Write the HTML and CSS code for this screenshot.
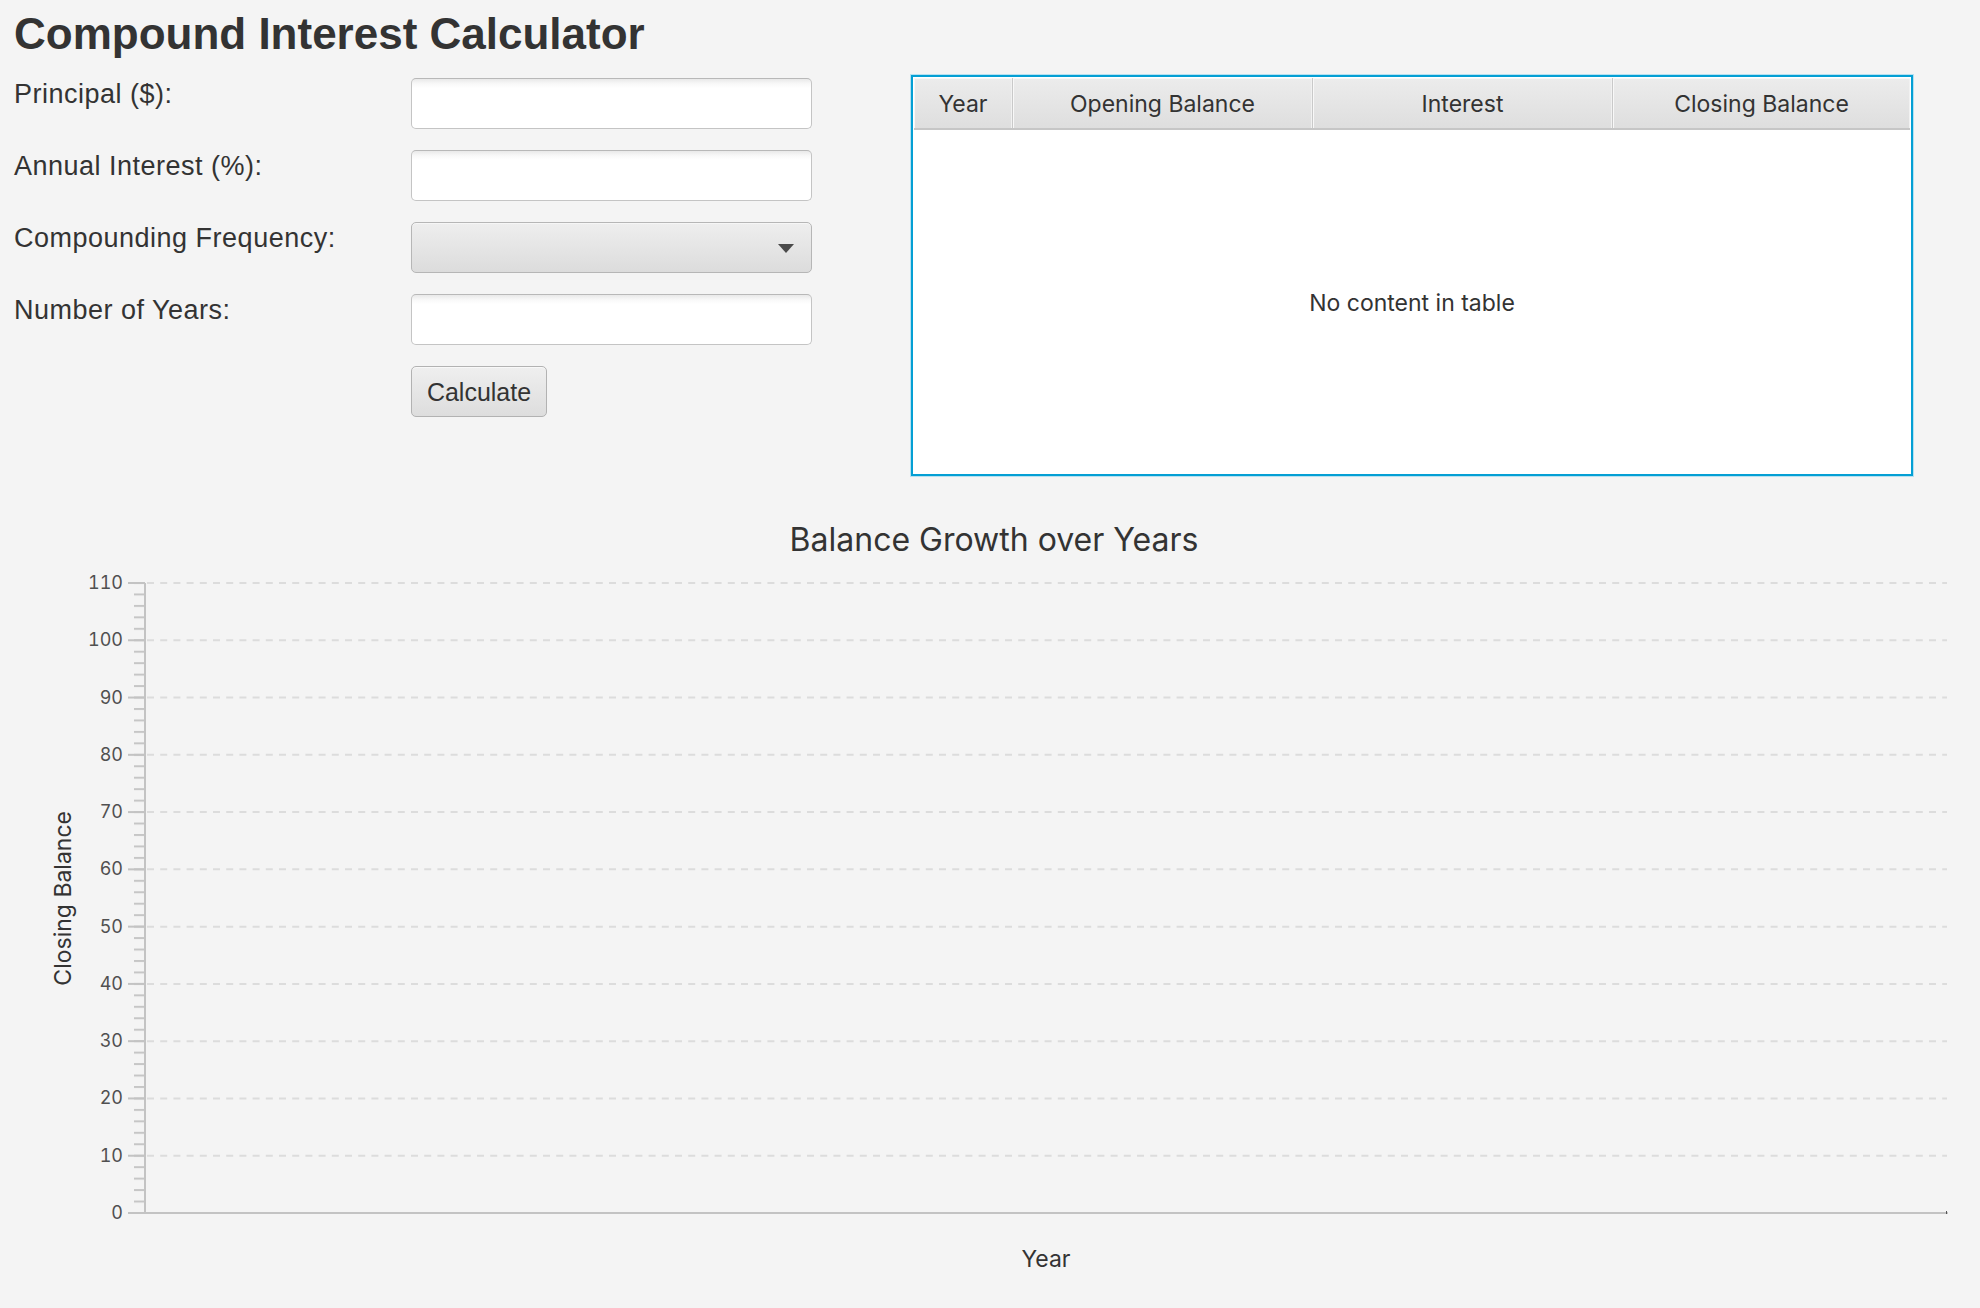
FILE: index.html
```html
<!DOCTYPE html>
<html>
<head>
<meta charset="utf-8">
<title>Compound Interest Calculator</title>
<link rel="stylesheet" href="styles.css">
</head>
<body>
<div class="app">
  <h1 class="title">Compound Interest Calculator</h1>
  <div class="top">
    <div class="form">
      <div class="label">Principal ($):</div>
      <div class="field input"></div>
      <div class="label">Annual Interest (%):</div>
      <div class="field input"></div>
      <div class="label">Compounding Frequency:</div>
      <div class="field combo"><span class="arrow"></span></div>
      <div class="label">Number of Years:</div>
      <div class="field input"></div>
      <div class="label"></div>
      <div class="cell-btn"><button class="btn">Calculate</button></div>
    </div>
    <div class="table">
      <div class="thead">
        <div class="th">Year</div>
        <div class="th">Opening Balance</div>
        <div class="th">Interest</div>
        <div class="th last">Closing Balance</div>
      </div>
      <div class="tbody">No content in table</div>
    </div>
  </div>
  <div class="chart">
    <div class="chart-title">Balance Growth over Years</div>
    <div class="chart-body">
      <div class="y-title">Closing Balance</div>
      <div class="y-labels">
        <span>110</span><span>100</span><span>90</span><span>80</span><span>70</span><span>60</span>
        <span>50</span><span>40</span><span>30</span><span>20</span><span>10</span><span>0</span>
      </div>
      <svg class="plot" width="1820" height="652" viewBox="0 0 1820 652">
        <defs>
          <pattern id="minor" patternUnits="userSpaceOnUse" x="0" y="10" width="11" height="11.4545">
            <rect x="0" y="0" width="11" height="2" fill="#c6c6c6"/>
          </pattern>
        </defs>
        <g stroke="#dcdcdc" stroke-width="2" stroke-dasharray="7 6.2">
          <line x1="19" x2="1819" y1="11" y2="11"/>
          <line x1="19" x2="1819" y1="68.27" y2="68.27"/>
          <line x1="19" x2="1819" y1="125.55" y2="125.55"/>
          <line x1="19" x2="1819" y1="182.82" y2="182.82"/>
          <line x1="19" x2="1819" y1="240.09" y2="240.09"/>
          <line x1="19" x2="1819" y1="297.36" y2="297.36"/>
          <line x1="19" x2="1819" y1="354.64" y2="354.64"/>
          <line x1="19" x2="1819" y1="411.91" y2="411.91"/>
          <line x1="19" x2="1819" y1="469.18" y2="469.18"/>
          <line x1="19" x2="1819" y1="526.45" y2="526.45"/>
          <line x1="19" x2="1819" y1="583.73" y2="583.73"/>
        </g>
        <rect x="6" y="10" width="11" height="632" fill="url(#minor)"/>
        <g fill="#c3c3c3">
          <rect x="0" y="10" width="17" height="2"/>
          <rect x="0" y="67.27" width="17" height="2"/>
          <rect x="0" y="124.55" width="17" height="2"/>
          <rect x="0" y="181.82" width="17" height="2"/>
          <rect x="0" y="239.09" width="17" height="2"/>
          <rect x="0" y="296.36" width="17" height="2"/>
          <rect x="0" y="353.64" width="17" height="2"/>
          <rect x="0" y="410.91" width="17" height="2"/>
          <rect x="0" y="468.18" width="17" height="2"/>
          <rect x="0" y="525.45" width="17" height="2"/>
          <rect x="0" y="582.73" width="17" height="2"/>
          <rect x="0" y="640" width="17" height="2"/>
          <rect x="16" y="11" width="2" height="631"/>
          <rect x="16" y="640" width="1804" height="2"/>
        </g>
        <rect x="1818" y="639" width="1" height="3" fill="#555"/>
      </svg>
    </div>
    <div class="x-title">Year</div>
  </div>
</div>
</body>
</html>
```
FILE: styles.css
```css
html, body {
  margin: 0;
  padding: 0;
  background: #f4f4f4;
}
body {
  color: #333333;
  font-family: "Liberation Sans", Arial, sans-serif;
}
.app {
  padding: 12px 14px 0 14px;
}
.title {
  margin: 0;
  font: bold 44px/43px "Liberation Sans", Arial, sans-serif;
  color: #333333;
}
.top {
  display: flex;
  margin-top: 20px;
  height: 401px;
}
.form {
  width: 798px;
  display: grid;
  grid-template-columns: 397px 401px;
  grid-auto-rows: 51px;
  row-gap: 21px;
  padding-top: 3px;
  align-content: start;
}
.label {
  font: 27px/30px "Liberation Sans", Arial, sans-serif;
  letter-spacing: 0.5px;
  margin-top: 1px;
  color: #333333;
  white-space: nowrap;
}
.field {
  box-sizing: border-box;
  height: 51px;
  border-radius: 5px;
}
.input {
  border: 1.5px solid #c4c4c4;
  border-top-color: #b8b8b8;
  background: linear-gradient(to bottom, #e9e9e9 0px, #f9f9f9 5px, #ffffff 9px, #ffffff 100%);
}
.combo {
  position: relative;
  border: 1.5px solid #b6b6b6;
  background: linear-gradient(to bottom, #eeeeee 0%, #dcdcdc 100%);
  box-shadow: inset 0 1px 0 #f6f6f6;
}
.arrow {
  position: absolute;
  right: 17px;
  top: 21px;
  width: 0;
  height: 0;
  border-left: 8px solid transparent;
  border-right: 8px solid transparent;
  border-top: 9px solid #4a4a4a;
}
.cell-btn {
  display: flex;
}
.btn {
  box-sizing: border-box;
  height: 51px;
  width: 136px;
  padding: 0;
  margin: 0;
  border: 1.5px solid #b2b2b2;
  border-radius: 5px;
  background: linear-gradient(to bottom, #efefef 0%, #dddddd 100%);
  box-shadow: inset 0 1px 0 #f8f8f8;
  font: 25px/30px "Liberation Sans", Arial, sans-serif;
  color: #333333;
}
.table {
  box-sizing: border-box;
  margin-left: 99px;
  width: 1002px;
  height: 401px;
  border: 2px solid #049fd4;
  padding: 1px;
  box-shadow: 0 0 0 1px #b5e1f1;
  background: #ffffff;
  display: flex;
  flex-direction: column;
}
.thead {
  display: grid;
  grid-template-columns: 99px 300px 300px 1fr;
  height: 52px;
  box-sizing: border-box;
  border-bottom: 2px solid #c6c6c6;
}
.th {
  box-sizing: border-box;
  border-right: 1px solid #c9c9c9;
  background: linear-gradient(to bottom, #ececec 0%, #dedede 100%);
  box-shadow: inset 1px 1px 0 #f8f8f8, inset -1px 0 0 #f1f1f1;
  display: flex;
  align-items: center;
  justify-content: center;
  font: 23px/30px "Inter", "Noto Sans", sans-serif;
  color: #333333;
  padding-top: 1px;
}
.th.last {
  border-right: none;
}
.tbody {
  flex: 1;
  display: flex;
  align-items: center;
  justify-content: center;
  font: 23px/30px "Inter", "Noto Sans", sans-serif;
  color: #333333;
  padding-top: 2px;
}
.chart {
  margin-top: 44px;
}
.chart-title {
  font: 32px/40px "Inter", "Noto Sans", sans-serif;
  text-align: center;
  color: #333333;
  padding-left: 8px;
}
.chart-body {
  display: flex;
  margin-top: 12px;
  height: 652px;
}
.y-title {
  margin-left: 35px;
  width: 29px;
  align-self: center;
  writing-mode: vertical-rl;
  transform: rotate(180deg);
  font: 23px/29px "Inter", "Noto Sans", sans-serif;
  color: #333333;
  white-space: nowrap;
}
.y-labels {
  width: 45px;
  margin-right: 5px;
  display: flex;
  flex-direction: column;
  justify-content: space-between;
  align-items: flex-end;
  font: 18px/22px "Inter", "Noto Sans", sans-serif;
  font-variant-numeric: tabular-nums;
  color: #505050;
}
.y-labels span {
  height: 22px;
}
.plot {
  display: block;
  flex: none;
}
.x-title {
  margin-top: 20px;
  margin-left: 131px;
  width: 1802px;
  text-align: center;
  font: 23px/30px "Inter", "Noto Sans", sans-serif;
  color: #333333;
}
```
